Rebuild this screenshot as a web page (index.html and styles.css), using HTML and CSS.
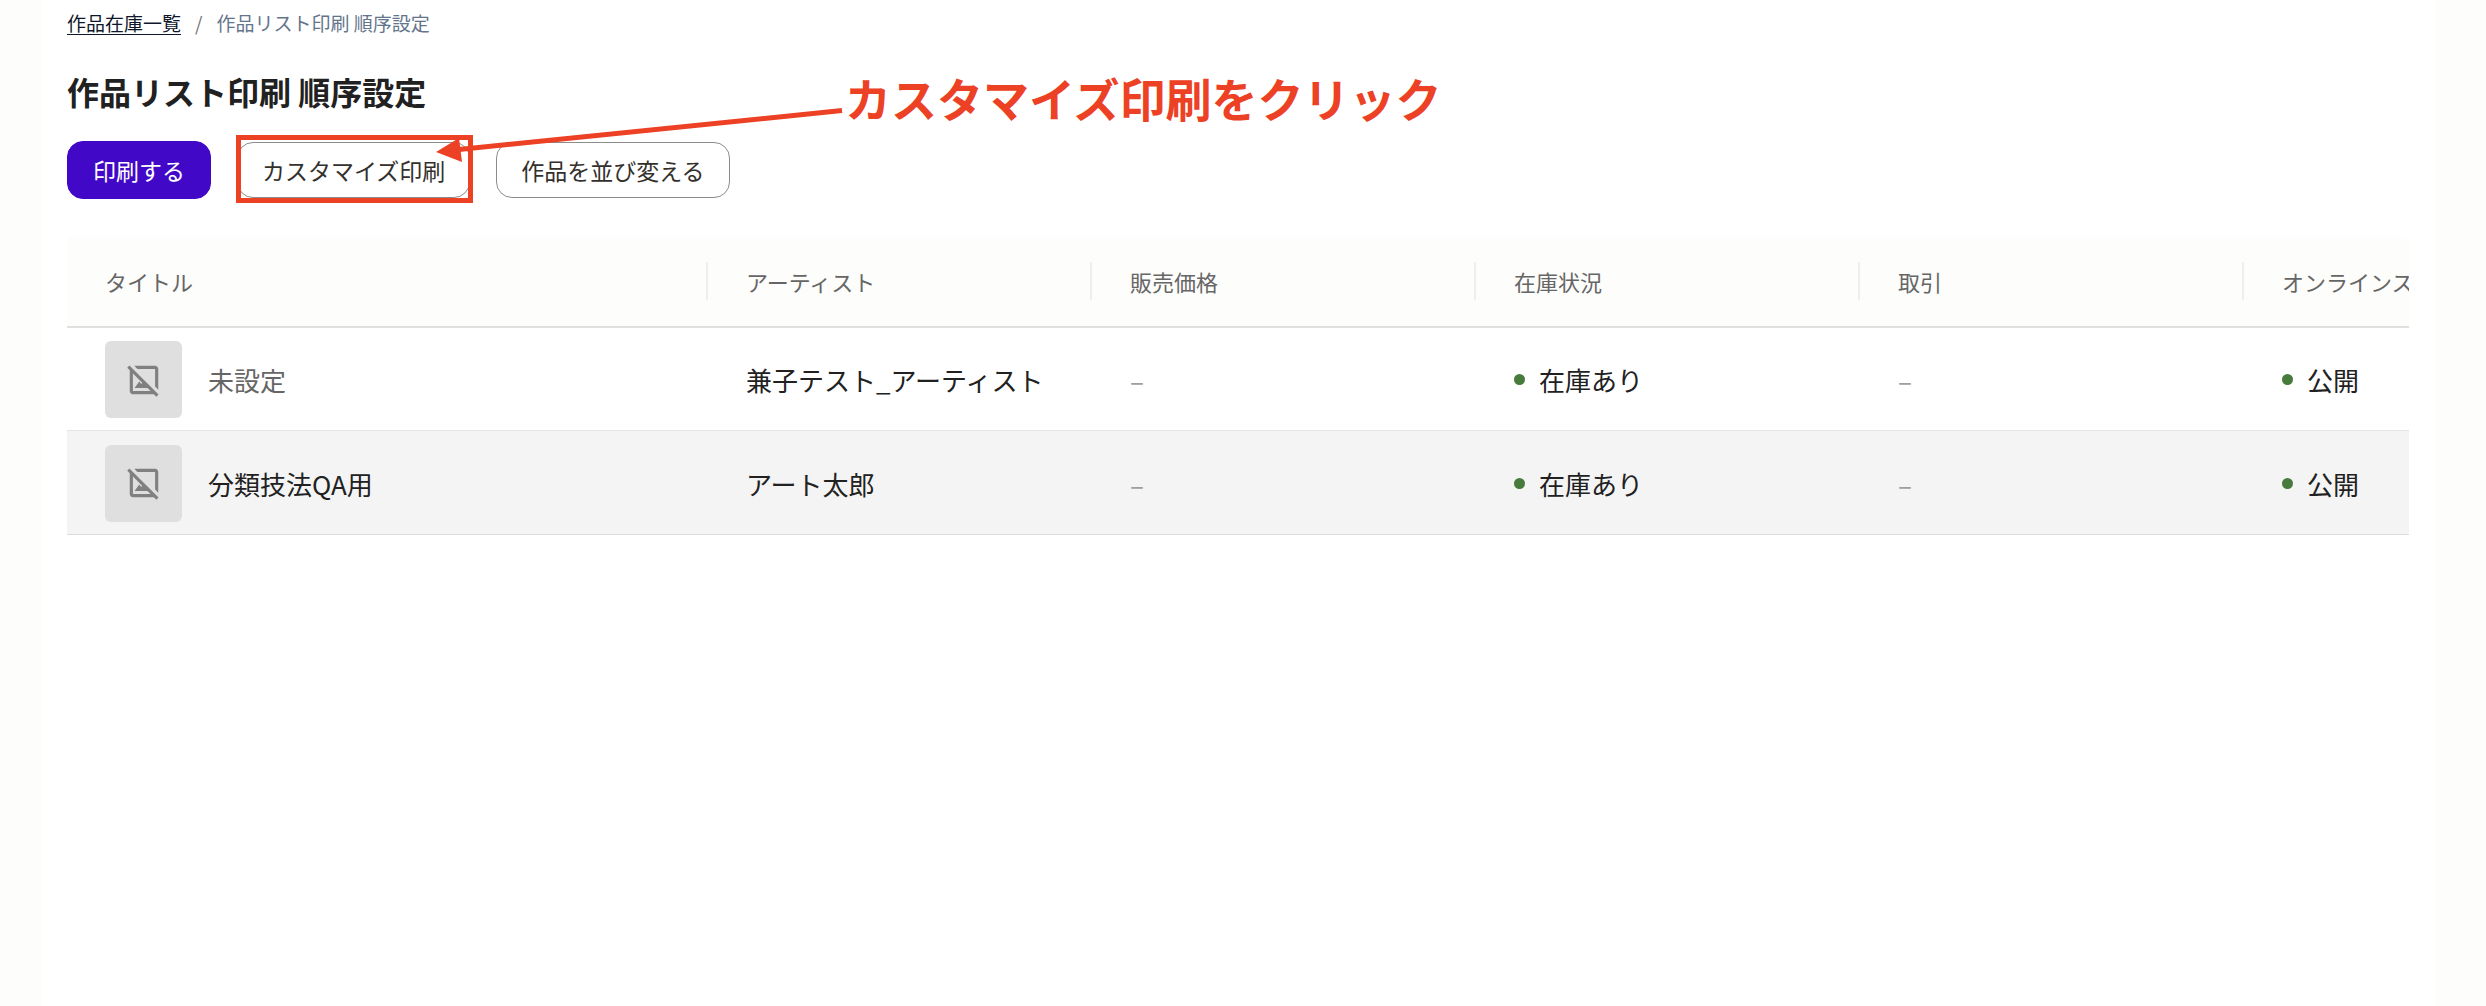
FILE: index.html
```html
<!DOCTYPE html>
<html lang="ja">
<head>
    <meta charset="UTF-8">
    <meta name="viewport" content="width=device-width, initial-scale=1.0">
    <title>作品リスト印刷 順序設定</title>
    <link rel="stylesheet" href="styles.css">
</head>
<body>
    <main class="panel">
        <nav class="breadcrumb">
            <a href="#works">作品在庫一覧</a>
            <span class="slash">/</span>
            <span>作品リスト印刷 順序設定</span>
        </nav>

        <h1>作品リスト印刷 順序設定</h1>

        <div class="actions">
            <button type="button" class="btn btn-primary">印刷する</button>
            <div class="target">
                <button type="button" class="btn">カスタマイズ印刷</button>
                <!-- Guide annotation -->
                <div class="target-frame"></div>
                <svg class="target-arrow" viewBox="0 0 412 60" width="412" height="60">
                    <path d="M24 48.5 L407 9.5" stroke="#ec4125" stroke-width="5" fill="none"/>
                    <polygon points="1,51 24,37 27,61" fill="#ec4125"/>
                </svg>
                <p class="target-note">カスタマイズ印刷をクリック</p>
            </div>
            <button type="button" class="btn">作品を並び変える</button>
        </div>

        <!-- Works table -->
        <div class="table-wrap">
            <table class="works">
                <thead>
                    <tr>
                        <th class="col-title">タイトル</th>
                        <th>アーティスト</th>
                        <th>販売価格</th>
                        <th>在庫状況</th>
                        <th>取引</th>
                        <th>オンラインストア</th>
                    </tr>
                </thead>
                <tbody>
                    <tr>
                        <td>
                            <div class="work">
                                <div class="thumb">
                                    <svg viewBox="0 0 24 24" width="38" height="38"><path d="M19 5v11.17l2 2V5c0-1.1-.9-2-2-2H5.83l2 2H19zM2.81 2.81 1.39 4.22 3 5.83V19c0 1.1.9 2 2 2h13.17l1.61 1.61 1.41-1.41L2.81 2.81zM5 19V7.83l5.84 5.84-.59.83L9 13l-3 4h8.17l2 2H5z" class="frame"/></svg>
                                </div>
                                <span class="unset">未設定</span>
                            </div>
                        </td>
                        <td>兼子テスト_アーティスト</td>
                        <td class="empty">–</td>
                        <td><span class="status">在庫あり</span></td>
                        <td class="empty">–</td>
                        <td><span class="status">公開</span></td>
                    </tr>
                    <tr>
                        <td>
                            <div class="work">
                                <div class="thumb">
                                    <svg viewBox="0 0 24 24" width="38" height="38"><path d="M19 5v11.17l2 2V5c0-1.1-.9-2-2-2H5.83l2 2H19zM2.81 2.81 1.39 4.22 3 5.83V19c0 1.1.9 2 2 2h13.17l1.61 1.61 1.41-1.41L2.81 2.81zM5 19V7.83l5.84 5.84-.59.83L9 13l-3 4h8.17l2 2H5z" class="frame"/></svg>
                                </div>
                                <span>分類技法QA用</span>
                            </div>
                        </td>
                        <td>アート太郎</td>
                        <td class="empty">–</td>
                        <td><span class="status">在庫あり</span></td>
                        <td class="empty">–</td>
                        <td><span class="status">公開</span></td>
                    </tr>
                </tbody>
            </table>
        </div>
    </main>
</body>
</html>
```
FILE: styles.css
```css
* {
    box-sizing: border-box;
}
body {
    margin: 0;
    padding: 0 51px 0 41px;
    background-color: #fdfdfb;
    color: #212121;
    font-family: "Noto Sans CJK JP", sans-serif;
    font-size: 26px;
}
.panel {
    min-height: 100vh;
    padding: 9px 26px;
    background-color: #fff;
}
.breadcrumb {
    display: flex;
    gap: 14px;
    font-size: 19px;
    line-height: 28px;
    color: #64748b;
}
.breadcrumb a {
    color: #0f172a;
    text-underline-offset: 3px;
}
.breadcrumb .slash {
    color: #757575;
}
h1 {
    margin: 30px 0 26px;
    font-size: 32px;
    line-height: 48px;
    font-weight: bold;
}
.actions {
    display: flex;
    align-items: center;
    gap: 26px;
}
.btn {
    display: block;
    height: 56px;
    padding: 0 24px;
    border: 1px solid #8c8c8c;
    border-radius: 16px;
    background-color: #fff;
    color: #33302c;
    font-family: inherit;
    font-size: 23px;
    line-height: 32px;
    cursor: pointer;
}
.btn-primary {
    height: 58px;
    padding: 0 25px;
    border-color: #4208c8;
    background-color: #4208c8;
    color: #fff;
}
.target {
    position: relative;
}
.target-frame {
    position: absolute;
    inset: -7px -3px -5px -1px;
    border: 5px solid #ec4125;
    pointer-events: none;
}
.target-arrow {
    position: absolute;
    top: -41px;
    left: 198px;
    overflow: visible;
    pointer-events: none;
}
.target-note {
    position: absolute;
    top: -79px;
    left: 608px;
    margin: 0;
    color: #ec4125;
    font-size: 46px;
    line-height: 68px;
    font-weight: bold;
    white-space: nowrap;
}
.table-wrap {
    margin-top: 38px;
    border-radius: 6px 6px 0 0;
    overflow-x: auto;
    scrollbar-width: none;
}
.works {
    width: 2561px;
    table-layout: fixed;
    border-collapse: separate;
    border-spacing: 0;
}
.works th {
    position: relative;
    width: 384px;
    height: 91px;
    padding: 0 38px 2px;
    border-bottom: 2px solid #e0e0e0;
    background-color: #fdfdfb;
    color: #666;
    font-size: 22px;
    font-weight: normal;
    text-align: left;
    white-space: nowrap;
}
.works th.col-title {
    width: 641px;
}
/* column separator */
.works th::after {
    content: "";
    position: absolute;
    top: 25px;
    right: 0;
    width: 2px;
    height: 38px;
    background-color: #eee;
}
.works td {
    height: 103px;
    padding: 1px 38px 0;
    border-bottom: 1px solid #e4e4e4;
    white-space: nowrap;
}
.works tbody tr:nth-child(even) {
    background-color: #f4f4f4;
}
.works tbody tr:last-child td {
    height: 104px;
    border-bottom-color: #dcdcdc;
}
.work {
    display: flex;
    align-items: center;
    gap: 26px;
}
.thumb {
    display: flex;
    align-items: center;
    justify-content: center;
    width: 77px;
    height: 77px;
    border-radius: 6px;
    background-color: #dfdfdf;
}
.thumb svg {
    fill: #808080;
}
.unset {
    color: #666;
}
.works .empty {
    color: #9e9e9e;
}
.status {
    display: flex;
    align-items: center;
    gap: 14px;
}
.status::before {
    content: "";
    width: 11px;
    height: 11px;
    border-radius: 50%;
    background-color: #467b3b;
}
```
